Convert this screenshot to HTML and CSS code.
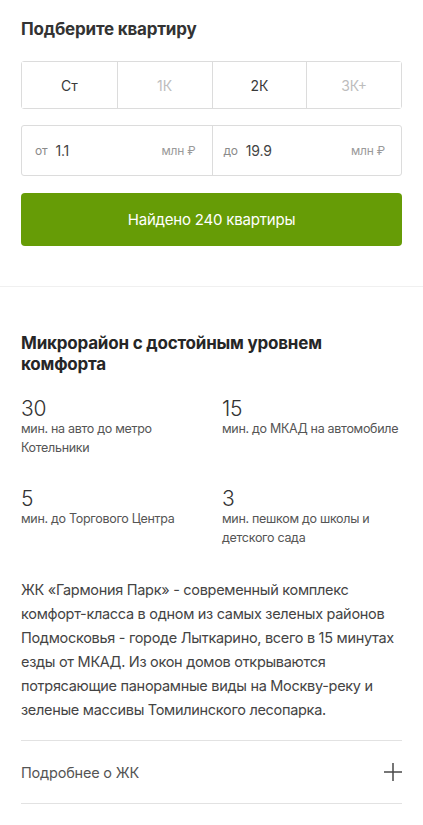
FILE: index.html
```html
<!DOCTYPE html>
<html lang="ru">
<head>
    <meta charset="UTF-8">
    <meta name="viewport" content="width=device-width, initial-scale=1">
    <title>Гармония Парк</title>
    <link rel="stylesheet" href="styles.css">
</head>
<body>
    <section class="filter">
        <h2 class="filter-title">Подберите квартиру</h2>

        <div class="rooms">
            <button class="room">Ст</button>
            <button class="room room-off">1К</button>
            <button class="room">2К</button>
            <button class="room room-off">3К+</button>
        </div>

        <div class="price">
            <label class="price-field">
                <span class="price-pre">от</span>
                <span class="price-val">1.1</span>
                <span class="price-unit">млн ₽</span>
            </label>
            <label class="price-field">
                <span class="price-pre">до</span>
                <span class="price-val">19.9</span>
                <span class="price-unit">млн ₽</span>
            </label>
        </div>

        <button class="found-btn">Найдено 240 квартиры</button>
    </section>

    <section class="about">
        <h2 class="about-title">Микрорайон с достойным уровнем комфорта</h2>

        <div class="stats">
            <div class="stat">
                <div class="stat-num">30</div>
                <div class="stat-text">мин. на авто до метро Котельники</div>
            </div>
            <div class="stat">
                <div class="stat-num">15</div>
                <div class="stat-text">мин. до МКАД на автомобиле</div>
            </div>
            <div class="stat">
                <div class="stat-num">5</div>
                <div class="stat-text">мин. до Торгового Центра</div>
            </div>
            <div class="stat">
                <div class="stat-num">3</div>
                <div class="stat-text">мин. пешком до школы и детского сада</div>
            </div>
        </div>

        <p class="about-text">ЖК «Гармония Парк» - современный комплекс комфорт-класса в одном из самых зеленых районов Подмосковья - городе Лыткарино, всего в 15 минутах езды от МКАД. Из окон домов открываются потрясающие панорамные виды на Москву-реку и зеленые массивы Томилинского лесопарка.</p>

        <div class="more">
            <span>Подробнее о ЖК</span>
            <svg class="more-icon" width="18" height="18" viewBox="0 0 18 18">
                <path d="M9 0V18M0 9H18" stroke="#4a4a4a" stroke-width="1.5" fill="none"/>
            </svg>
        </div>
    </section>
</body>
</html>
```

FILE: styles.css
```css
body {
    font-family: Inter, "Noto Sans", sans-serif;
    color: #2b2b2b;
    background-color: #fff;
    margin: 0;
    padding: 0;
    letter-spacing: -0.2px;
}

.filter {
    padding: 16px 21px 40px;
    border-bottom: 1px solid #f0f0f0;
}

.filter-title {
    font-size: 17px;
    font-weight: 700;
    margin: 0 0 19px;
    line-height: 26px;
    color: #333;
}

.rooms {
    display: grid;
    grid-template-columns: repeat(4, 1fr);
    border: 1px solid #dcdcdc;
    border-radius: 3px;
    height: 48px;
    box-sizing: border-box;
}

.room {
    border: none;
    border-left: 1px solid #dcdcdc;
    background: #fff;
    font-family: inherit;
    font-size: 14px;
    color: #3a3a3a;
    padding: 0;
}

.room:first-child {
    border-left: none;
}

.room-off {
    color: #bdbdbd;
}

.price {
    display: grid;
    grid-template-columns: 1fr 1fr;
    border: 1px solid #dcdcdc;
    border-radius: 3px;
    height: 51px;
    box-sizing: border-box;
    margin-top: 16px;
}

.price-field {
    display: flex;
    align-items: center;
    padding: 0 16px 0 13px;
    font-size: 12px;
    color: #8a8a8a;
}

.price-field + .price-field {
    border-left: 1px solid #dcdcdc;
    padding-left: 11px;
}

.price-pre {
    margin-right: 8px;
}

.price-val {
    flex-grow: 1;
    font-size: 14px;
    color: #444;
}

.price-unit {
    color: #9a9a9a;
}

.found-btn {
    display: block;
    width: 100%;
    height: 53px;
    margin-top: 17px;
    border: none;
    border-radius: 4px;
    background-color: #669c06;
    color: #fff;
    font-family: inherit;
    font-size: 15px;
    letter-spacing: -0.2px;
}

.about {
    padding: 46px 21px 0;
}

.about-title {
    font-size: 17px;
    font-weight: 700;
    line-height: 21px;
    margin: 0 0 23px;
    color: #262626;
    max-width: 330px;
}

.stats {
    display: grid;
    grid-template-columns: 201px 1fr;
    row-gap: 23px;
}

.stat-num {
    font-size: 21px;
    font-weight: 300;
    line-height: 21px;
    color: #333;
}

.stat-text {
    font-size: 12.5px;
    line-height: 19px;
    color: #555;
    min-height: 46px;
    letter-spacing: -0.3px;
}

.about-text {
    font-size: 14.5px;
    line-height: 24px;
    color: #444;
    margin: 23px 0 0;
    letter-spacing: -0.3px;
}

.more {
    display: flex;
    align-items: center;
    justify-content: space-between;
    margin-top: 18px;
    height: 62px;
    border-top: 1px solid #e2e2e2;
    border-bottom: 1px solid #e2e2e2;
    font-size: 14.5px;
    color: #555;
}
```
